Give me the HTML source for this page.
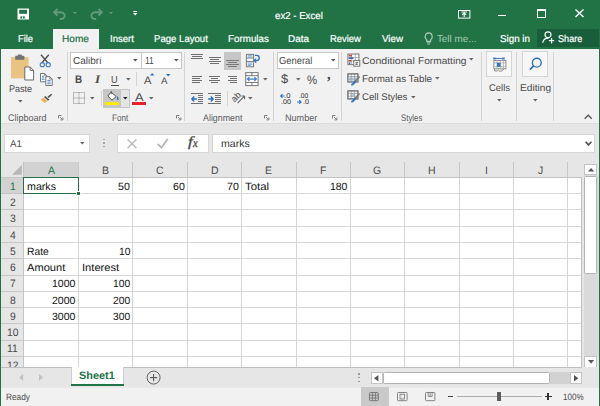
<!DOCTYPE html>
<html><head><meta charset="utf-8"><title>ex2 - Excel</title>
<style>
html,body{margin:0;padding:0;}
body{width:600px;height:406px;overflow:hidden;background:#fff;position:relative;font-family:"Liberation Sans",sans-serif;text-rendering:geometricPrecision;}
.r{position:absolute;display:block;}
svg{overflow:visible;}
.t{position:absolute;white-space:nowrap;line-height:14px;transform-origin:0 50%;}
</style></head><body>
<!-- window -->
<div class="r" style="left:0px;top:0px;width:600px;height:49px;background:#217346;"></div>
<div class="r" style="left:1px;top:49px;width:598px;height:75px;background:#f1f1f1;"></div>
<div class="r" style="left:1px;top:124px;width:598px;height:38px;background:#e6e6e6;"></div>
<div class="r" style="left:1px;top:123.4px;width:598px;height:1px;background:#dcdcdc;"></div>
<div class="r" style="left:537.3px;top:28.5px;width:61.7px;height:18px;background:#195e3a;"></div>
<div class="r" style="left:53.3px;top:28.5px;width:45.4px;height:21px;background:#f1f1f1;"></div>
<!-- title bar -->
<span class="t" style="left:275.30px;top:10px;font-size:10px;color:#fff;transform:scaleX(0.9666);-webkit-text-stroke:0.2px #fff;">ex2 - Excel</span>
<svg class="r" style="left:17px;top:7.5px" width="12.5" height="12" viewBox="0 0 12.5 12"><rect x="0.5" y="0.4" width="11.5" height="11.1" rx="0.5" fill="#fff"/><rect x="2.2" y="1.8" width="7.8" height="4" fill="#217346"/><rect x="3.3" y="8.4" width="4.5" height="2.2" fill="#217346"/><rect x="5.2" y="8.4" width="0.8" height="2.2" fill="#fff"/></svg>
<svg class="r" style="left:52.6px;top:8.2px" width="13" height="12" viewBox="0 0 13 12"><path d="M1.2 4.2H7.4C10.8 4.2 12.4 6.8 11.4 9C10.6 10.6 9 11.2 6.8 11" fill="none" stroke="#639b7c" stroke-width="1.9"/><path d="M4.5 0.9L1.2 4.2L4.5 7.5" fill="none" stroke="#639b7c" stroke-width="1.9"/></svg>
<svg class="r" style="left:72.5px;top:11.85px" width="4" height="2.3" viewBox="0 0 4 2.3"><path d="M0 0H4L2.0 2.3Z" fill="#639b7c"/></svg>
<svg class="r" style="left:89.6px;top:8.2px" width="13" height="12" viewBox="0 0 13 12"><g transform="translate(13 0) scale(-1 1)"><path d="M1.2 4.2H7.4C10.8 4.2 12.4 6.8 11.4 9C10.6 10.6 9 11.2 6.8 11" fill="none" stroke="#639b7c" stroke-width="1.9"/><path d="M4.5 0.9L1.2 4.2L4.5 7.5" fill="none" stroke="#639b7c" stroke-width="1.9"/></g></svg>
<svg class="r" style="left:109.3px;top:11.85px" width="4" height="2.3" viewBox="0 0 4 2.3"><path d="M0 0H4L2.0 2.3Z" fill="#639b7c"/></svg>
<svg class="r" style="left:133.2px;top:11.2px" width="4.4" height="4.6" viewBox="0 0 4.4 4.6"><rect x="0.3" y="0" width="3.8" height="1" fill="#fff"/><path d="M0 2.1H4.4L2.2 4.5Z" fill="#fff"/></svg>
<svg class="r" style="left:458px;top:10px" width="12.4" height="8.6" viewBox="0 0 12.4 8.6"><rect x="0.5" y="0.5" width="11.4" height="7.6" fill="none" stroke="#fff" stroke-width="1"/><path d="M6.2 7V3.2M4.2 4.8L6.2 2.8L8.2 4.8" fill="none" stroke="#fff" stroke-width="1.1"/><rect x="3.4" y="1.6" width="5.6" height="0.9" fill="#fff"/></svg>
<div class="r" style="left:498px;top:14.6px;width:8px;height:1.3px;background:#fff;"></div>
<div class="r" style="left:536.8px;top:9.4px;width:8.8px;height:8.8px;border:1.1px solid #fff;box-sizing:border-box;border-top-width:2.2px;"></div>
<svg class="r" style="left:575.4px;top:9.2px" width="9" height="8.6" viewBox="0 0 9 8.6"><path d="M0.5 0.5L8.5 8.1M8.5 0.5L0.5 8.1" stroke="#fff" stroke-width="1.4"/></svg>
<!-- tabs -->
<span class="t" style="left:17.90px;top:33px;font-size:9.9px;color:#fff;transform:scaleX(0.9474);-webkit-text-stroke:0.2px #fff;">File</span>
<span class="t" style="left:62.30px;top:33px;font-size:9.9px;color:#217346;transform:scaleX(1.0215);-webkit-text-stroke:0.2px #217346;">Home</span>
<span class="t" style="left:109.70px;top:33px;font-size:9.9px;color:#fff;transform:scaleX(0.9697);-webkit-text-stroke:0.2px #fff;">Insert</span>
<span class="t" style="left:153.50px;top:33px;font-size:9.9px;color:#fff;transform:scaleX(0.9714);-webkit-text-stroke:0.2px #fff;">Page Layout</span>
<span class="t" style="left:227.50px;top:33px;font-size:9.9px;color:#fff;transform:scaleX(0.9931);-webkit-text-stroke:0.2px #fff;">Formulas</span>
<span class="t" style="left:288.00px;top:33px;font-size:9.9px;color:#fff;transform:scaleX(1.0029);-webkit-text-stroke:0.2px #fff;">Data</span>
<span class="t" style="left:330.00px;top:33px;font-size:9.9px;color:#fff;transform:scaleX(0.9547);-webkit-text-stroke:0.2px #fff;">Review</span>
<span class="t" style="left:381.50px;top:33px;font-size:9.9px;color:#fff;transform:scaleX(0.9866);-webkit-text-stroke:0.2px #fff;">View</span>
<span class="t" style="left:436.90px;top:33px;font-size:9.9px;color:#a9ccb7;transform:scaleX(1.0000);">Tell me...</span>
<span class="t" style="left:500.20px;top:33px;font-size:9.9px;color:#fff;transform:scaleX(0.9936);-webkit-text-stroke:0.2px #fff;">Sign in</span>
<span class="t" style="left:558.20px;top:33px;font-size:9.9px;color:#fff;transform:scaleX(0.9231);-webkit-text-stroke:0.2px #fff;">Share</span>
<svg class="r" style="left:423.6px;top:32.4px" width="9.4" height="13" viewBox="0 0 9.4 13"><path d="M4.7 0.9A3.7 3.7 0 0 0 2.7 7.6V9.4H6.7V7.6A3.7 3.7 0 0 0 4.7 0.9Z" fill="none" stroke="#a9ccb7" stroke-width="1.1"/><path d="M2.9 10.8H6.5" stroke="#a9ccb7" stroke-width="1"/><path d="M3.5 12.2H5.9" stroke="#a9ccb7" stroke-width="0.9"/></svg>
<svg class="r" style="left:542px;top:31.4px" width="14" height="13" viewBox="0 0 14 13"><circle cx="6" cy="3.8" r="3" fill="none" stroke="#fff" stroke-width="1.2"/><path d="M0.8 11.8C1.2 8.6 3.4 7.2 6.4 7.2" fill="none" stroke="#fff" stroke-width="1.2"/><path d="M9.6 7V12.4M6.9 9.7H12.3" stroke="#fff" stroke-width="1.2"/></svg>
<!-- ribbon -->
<div class="r" style="left:67.2px;top:51.5px;width:1px;height:69.5px;background:#d4d4d4;"></div>
<div class="r" style="left:184px;top:51.5px;width:1px;height:69.5px;background:#d4d4d4;"></div>
<div class="r" style="left:273px;top:51.5px;width:1px;height:69.5px;background:#d4d4d4;"></div>
<div class="r" style="left:341.3px;top:51.5px;width:1px;height:69.5px;background:#d4d4d4;"></div>
<div class="r" style="left:481.3px;top:51.5px;width:1px;height:69.5px;background:#d4d4d4;"></div>
<div class="r" style="left:516.2px;top:51.5px;width:1px;height:69.5px;background:#d4d4d4;"></div>
<div class="r" style="left:553px;top:51.5px;width:1px;height:69.5px;background:#d4d4d4;"></div>
<span class="t" style="left:7.90px;top:112px;font-size:9.5px;color:#5c5c5c;transform:scaleX(0.9493);">Clipboard</span>
<span class="t" style="left:112.00px;top:112px;font-size:9.5px;color:#5c5c5c;transform:scaleX(0.8579);">Font</span>
<span class="t" style="left:203.30px;top:112px;font-size:9.5px;color:#5c5c5c;transform:scaleX(0.9330);">Alignment</span>
<span class="t" style="left:285.00px;top:112px;font-size:9.5px;color:#5c5c5c;transform:scaleX(0.9564);">Number</span>
<span class="t" style="left:401.00px;top:112px;font-size:9.5px;color:#5c5c5c;transform:scaleX(0.8228);">Styles</span>
<svg class="r" style="left:58.2px;top:115.2px" width="5.4" height="5.4" viewBox="0 0 5.4 5.4"><path d="M0.5 3.4V0.5H3.4" fill="none" stroke="#7a7a7a" stroke-width="1"/><path d="M2 2L4.8 4.8M4.9 2.4V4.9H2.4" fill="none" stroke="#7a7a7a" stroke-width="0.9"/></svg>
<svg class="r" style="left:175.7px;top:115.2px" width="5.4" height="5.4" viewBox="0 0 5.4 5.4"><path d="M0.5 3.4V0.5H3.4" fill="none" stroke="#7a7a7a" stroke-width="1"/><path d="M2 2L4.8 4.8M4.9 2.4V4.9H2.4" fill="none" stroke="#7a7a7a" stroke-width="0.9"/></svg>
<svg class="r" style="left:264.2px;top:115.2px" width="5.4" height="5.4" viewBox="0 0 5.4 5.4"><path d="M0.5 3.4V0.5H3.4" fill="none" stroke="#7a7a7a" stroke-width="1"/><path d="M2 2L4.8 4.8M4.9 2.4V4.9H2.4" fill="none" stroke="#7a7a7a" stroke-width="0.9"/></svg>
<svg class="r" style="left:331.8px;top:115.2px" width="5.4" height="5.4" viewBox="0 0 5.4 5.4"><path d="M0.5 3.4V0.5H3.4" fill="none" stroke="#7a7a7a" stroke-width="1"/><path d="M2 2L4.8 4.8M4.9 2.4V4.9H2.4" fill="none" stroke="#7a7a7a" stroke-width="0.9"/></svg>
<svg class="r" style="left:10px;top:53.5px" width="25" height="27" viewBox="0 0 25 27"><rect x="1" y="3" width="17.6" height="21.4" fill="#eac282"/><rect x="5.2" y="1.8" width="9.2" height="4" fill="#737373"/><rect x="7.6" y="0.4" width="4.4" height="3" rx="1.2" fill="#737373"/><path d="M14.8 13H20.2L23.6 16.4V26H14.8Z" fill="#fff" stroke="#6a6a6a" stroke-width="1"/><path d="M20.2 13V16.4H23.6" fill="none" stroke="#6a6a6a" stroke-width="1"/></svg>
<span class="t" style="left:8.90px;top:83px;font-size:9.7px;color:#4a4a4a;transform:scaleX(0.9321);">Paste</span>
<svg class="r" style="left:18.0px;top:99.7px" width="4.6" height="2.6" viewBox="0 0 4.6 2.6"><path d="M0 0H4.6L2.3 2.6Z" fill="#666"/></svg>
<svg class="r" style="left:39.4px;top:53.6px" width="13" height="14" viewBox="0 0 13 14"><path d="M2 0.8L8.8 8.8M9.8 0.8L3 8.8" stroke="#505050" stroke-width="1.4" fill="none"/><circle cx="3.3" cy="10.7" r="2.1" fill="none" stroke="#3f7cc8" stroke-width="1.1"/><circle cx="9.2" cy="10.7" r="2.1" fill="none" stroke="#3f7cc8" stroke-width="1.1"/></svg>
<svg class="r" style="left:39.6px;top:73px" width="13" height="13.5" viewBox="0 0 13 13.5"><path d="M0.5 0.5H4.6L6.8 2.7V8.8H0.5Z" fill="#fff" stroke="#747474" stroke-width="1"/><path d="M4.6 0.5V2.7H6.8" fill="none" stroke="#747474" stroke-width="0.8"/><path d="M5.8 3.7H9.8L12.2 6.1V12.5H5.8Z" fill="#fff" stroke="#747474" stroke-width="1"/><path d="M9.8 3.7V6.1H12.2" fill="none" stroke="#747474" stroke-width="0.8"/><path d="M7.4 7.4H10.6M7.4 9.1H10.6M7.4 10.8H10.6M1.9 3.2H4.2M1.9 4.9H4.4M1.9 6.6H4.4" stroke="#3f7cc8" stroke-width="0.9"/></svg>
<svg class="r" style="left:56.7px;top:77.3px" width="4.6" height="2.6" viewBox="0 0 4.6 2.6"><path d="M0 0H4.6L2.3 2.6Z" fill="#666"/></svg>
<svg class="r" style="left:40.2px;top:93px" width="13" height="11" viewBox="0 0 13 11"><g transform="scale(1.06 0.96)"><path d="M7 4L10.5 0.8L11.5 1.8L8.3 5.2Z" fill="#555"/><path d="M5 3L9 7L7.5 8L3.8 4.2Z" fill="#555"/><path d="M3.3 4.8L7 8.5L4.5 10.5L0.5 7Z" fill="#e8b55c"/></g></svg>
<div class="r" style="left:70px;top:52px;width:71.5px;height:17.3px;background:#fff;border:1px solid #c6c6c6;box-sizing:border-box;"></div>
<div class="r" style="left:141.5px;top:52px;width:40px;height:17.3px;background:#fff;border:1px solid #c6c6c6;box-sizing:border-box;border-left:none;"></div>
<span class="t" style="left:72.80px;top:55px;font-size:10.2px;color:#4a4a4a;transform:scaleX(0.9821);">Calibri</span>
<span class="t" style="left:144.80px;top:55px;font-size:10.2px;color:#4a4a4a;transform:scaleX(0.8296);">11</span>
<svg class="r" style="left:133.3px;top:59.1px" width="4.6" height="2.6" viewBox="0 0 4.6 2.6"><path d="M0 0H4.6L2.3 2.6Z" fill="#555"/></svg>
<svg class="r" style="left:174.3px;top:59.1px" width="4.6" height="2.6" viewBox="0 0 4.6 2.6"><path d="M0 0H4.6L2.3 2.6Z" fill="#555"/></svg>
<span class="t" style="left:75.20px;top:73px;font-size:11px;color:#4a4a4a;transform:scaleX(0.8965);font-weight:700;">B</span>
<span class="t" style="left:95.13px;top:73px;font-size:11.5px;color:#4a4a4a;transform:scaleX(1.1325);font-weight:700;font-style:italic;font-family:'Liberation Serif',serif;">I</span>
<span class="t" style="left:111.40px;top:74px;font-size:10.2px;color:#4a4a4a;transform:scaleX(0.8987);">U</span>
<div class="r" style="left:111px;top:84.6px;width:7.5px;height:1px;background:#4a4a4a;"></div>
<svg class="r" style="left:125.5px;top:77.9px" width="4.6" height="2.6" viewBox="0 0 4.6 2.6"><path d="M0 0H4.6L2.3 2.6Z" fill="#666"/></svg>
<div class="r" style="left:135.6px;top:72px;width:1px;height:14px;background:#d4d4d4;"></div>
<span class="t" style="left:143.80px;top:74px;font-size:10.8px;color:#4a4a4a;transform:scaleX(1.0227);">A</span>
<svg class="r" style="left:149.8px;top:73px" width="4.4" height="2.6" viewBox="0 0 4.4 2.6"><path d="M0 2.6L2.2 0L4.4 2.6Z" fill="#2b72c4"/></svg>
<span class="t" style="left:161.20px;top:74px;font-size:9.4px;color:#4a4a4a;transform:scaleX(1.0321);">A</span>
<svg class="r" style="left:166.2px;top:73.6px" width="4.4" height="2.6" viewBox="0 0 4.4 2.6"><path d="M0 0L2.2 2.6L4.4 0Z" fill="#2b72c4"/></svg>
<svg class="r" style="left:73.4px;top:92.2px" width="12" height="12" viewBox="0 0 12 12"><path d="M0.5 0.5H11.5V11.5H0.5ZM6 0.5V11.5M0.5 6H11.5" fill="none" stroke="#858585" stroke-width="1" stroke-dasharray="1 1"/></svg>
<svg class="r" style="left:90.2px;top:96.6px" width="4.6" height="2.6" viewBox="0 0 4.6 2.6"><path d="M0 0H4.6L2.3 2.6Z" fill="#666"/></svg>
<div class="r" style="left:101.2px;top:91px;width:1px;height:14.5px;background:#d4d4d4;"></div>
<div class="r" style="left:103.3px;top:89.4px;width:26.5px;height:18.4px;background:#c6c6c6;"></div>
<div class="r" style="left:121px;top:90.2px;width:8px;height:16.8px;background:#e4e4e4;"></div>
<svg class="r" style="left:107px;top:91.2px" width="13" height="10" viewBox="0 0 13 10"><path d="M4.2 1.2L9.2 5.6L5 9.2L0.8 5Z" fill="#fff" stroke="#555" stroke-width="1"/><path d="M10.3 5C12 7.3 12 9.2 10.8 9.2C9.6 9.2 9.6 7.3 10.3 5Z" fill="#2b72c4"/><path d="M4.2 0V3.2" stroke="#555" stroke-width="1"/></svg>
<div class="r" style="left:105px;top:101.8px;width:14px;height:2.9px;background:#ffeb00;"></div>
<svg class="r" style="left:122.7px;top:96.6px" width="4.6" height="2.6" viewBox="0 0 4.6 2.6"><path d="M0 0H4.6L2.3 2.6Z" fill="#222"/></svg>
<span class="t" style="left:134.80px;top:91px;font-size:11.2px;color:#4a4a4a;transform:scaleX(1.1461);">A</span>
<div class="r" style="left:132px;top:102px;width:13.6px;height:3px;background:#e8202a;"></div>
<svg class="r" style="left:149.4px;top:96.6px" width="4.6" height="2.6" viewBox="0 0 4.6 2.6"><path d="M0 0H4.6L2.3 2.6Z" fill="#666"/></svg>
<div class="r" style="left:191px;top:54px;width:12px;height:1px;background:#707070;"></div>
<div class="r" style="left:192.2px;top:56px;width:9.7px;height:1px;background:#707070;"></div>
<div class="r" style="left:191px;top:58px;width:12px;height:1px;background:#707070;"></div>
<div class="r" style="left:208.6px;top:57px;width:12.4px;height:1px;background:#707070;"></div>
<div class="r" style="left:210.2px;top:59px;width:9.2px;height:1px;background:#707070;"></div>
<div class="r" style="left:208.6px;top:61px;width:12.4px;height:1px;background:#707070;"></div>
<div class="r" style="left:210.2px;top:63px;width:9.2px;height:1px;background:#707070;"></div>
<div class="r" style="left:223.6px;top:51.8px;width:17.3px;height:18px;background:#c6c6c6;"></div>
<div class="r" style="left:226.1px;top:60px;width:12.5px;height:1px;background:#7a7a7a;"></div>
<div class="r" style="left:227.8px;top:62px;width:9.2px;height:1px;background:#7a7a7a;"></div>
<div class="r" style="left:226.1px;top:64px;width:12.5px;height:1px;background:#7a7a7a;"></div>
<div class="r" style="left:227.8px;top:66px;width:9.2px;height:1px;background:#7a7a7a;"></div>
<div class="r" style="left:192px;top:76px;width:9.9px;height:1px;background:#707070;"></div>
<div class="r" style="left:192px;top:78px;width:7.9px;height:1px;background:#707070;"></div>
<div class="r" style="left:192px;top:80px;width:9.9px;height:1px;background:#707070;"></div>
<div class="r" style="left:192px;top:82px;width:7.9px;height:1px;background:#707070;"></div>
<div class="r" style="left:209px;top:76px;width:11px;height:1px;background:#707070;"></div>
<div class="r" style="left:211px;top:78px;width:7px;height:1px;background:#707070;"></div>
<div class="r" style="left:209px;top:80px;width:11px;height:1px;background:#707070;"></div>
<div class="r" style="left:211px;top:82px;width:7px;height:1px;background:#707070;"></div>
<div class="r" style="left:227.5px;top:76px;width:9.7px;height:1px;background:#707070;"></div>
<div class="r" style="left:229.9px;top:78px;width:7.3px;height:1px;background:#707070;"></div>
<div class="r" style="left:227.5px;top:80px;width:9.7px;height:1px;background:#707070;"></div>
<div class="r" style="left:229.9px;top:82px;width:7.3px;height:1px;background:#707070;"></div>
<svg class="r" style="left:245px;top:53px" width="16" height="15" viewBox="0 0 16 15"><rect x="1.4" y="1.4" width="7.2" height="12.4" fill="#fff" stroke="#7a7a7a" stroke-width="1"/><path d="M1.4 5H8.6M1.4 8.6H8.6" stroke="#7a7a7a" stroke-width="1"/><path d="M2.6 2.7H7.4M2.6 3.9H7.4M2.6 10H7.4M2.6 11.3H7.4M2.6 12.5H6" stroke="#5b9bd5" stroke-width="0.8"/><path d="M9.8 2.4H11.6A2.6 2.6 0 0 1 11.6 7.6H9.6" fill="none" stroke="#2b72c4" stroke-width="1.3"/><path d="M11.2 5.6L9.2 7.6L11.2 9.6" fill="none" stroke="#2b72c4" stroke-width="1.3"/></svg>
<svg class="r" style="left:245px;top:72px" width="14" height="14" viewBox="0 0 14 14"><rect x="0.7" y="0.6" width="12.4" height="13" fill="#fff" stroke="#777" stroke-width="1"/><path d="M0.7 3.7H13.1M0.7 10.5H13.1M6.9 0.6V3.7M6.9 10.5V13.6" stroke="#777" stroke-width="1"/><path d="M2.6 7.1H11.2M4.4 5.2L2.4 7.1L4.4 9M9.4 5.2L11.4 7.1L9.4 9" fill="none" stroke="#3a80cc" stroke-width="1.2"/></svg>
<svg class="r" style="left:262.7px;top:77.9px" width="4.6" height="2.6" viewBox="0 0 4.6 2.6"><path d="M0 0H4.6L2.3 2.6Z" fill="#666"/></svg>
<div class="r" style="left:190.9px;top:93px;width:12.1px;height:1px;background:#707070;"></div>
<div class="r" style="left:197.6px;top:95px;width:5.4px;height:1px;background:#707070;"></div>
<div class="r" style="left:197.6px;top:97px;width:5.4px;height:1px;background:#707070;"></div>
<div class="r" style="left:197.6px;top:99px;width:5.4px;height:1px;background:#707070;"></div>
<div class="r" style="left:197.6px;top:101px;width:5.4px;height:1px;background:#707070;"></div>
<div class="r" style="left:190.9px;top:103px;width:12.1px;height:1px;background:#707070;"></div>
<div class="r" style="left:208.4px;top:93px;width:12.6px;height:1px;background:#707070;"></div>
<div class="r" style="left:215.3px;top:95px;width:5.7px;height:1px;background:#707070;"></div>
<div class="r" style="left:215.3px;top:97px;width:5.7px;height:1px;background:#707070;"></div>
<div class="r" style="left:215.3px;top:99px;width:5.7px;height:1px;background:#707070;"></div>
<div class="r" style="left:215.3px;top:101px;width:5.7px;height:1px;background:#707070;"></div>
<div class="r" style="left:208.4px;top:103px;width:12.6px;height:1px;background:#707070;"></div>
<svg class="r" style="left:190.8px;top:94.5px" width="6" height="8" viewBox="0 0 6 8"><path d="M0.8 4H5.8M3.2 1.5L0.8 4L3.2 6.5" fill="none" stroke="#2b72c4" stroke-width="1.4"/></svg>
<svg class="r" style="left:208.4px;top:94.5px" width="6" height="8" viewBox="0 0 6 8"><path d="M0.2 4H5.2M2.8 1.5L5.2 4L2.8 6.5" fill="none" stroke="#2b72c4" stroke-width="1.4"/></svg>
<div class="r" style="left:226.6px;top:91px;width:1px;height:14.5px;background:#d4d4d4;"></div>
<svg class="r" style="left:230px;top:90px" width="17" height="16" viewBox="0 0 17 16"><path d="M7.6 13.2L14.4 6.2M14.6 6H11.4M14.6 6V9.2" fill="none" stroke="#666" stroke-width="1.1"/><text x="0" y="0" font-size="9" fill="#444" transform="translate(4.4 12.5) rotate(-45)" font-family="Liberation Sans, sans-serif">ab</text></svg>
<svg class="r" style="left:247.7px;top:96.6px" width="4.6" height="2.6" viewBox="0 0 4.6 2.6"><path d="M0 0H4.6L2.3 2.6Z" fill="#666"/></svg>
<div class="r" style="left:276.5px;top:52px;width:62px;height:17.3px;background:#fff;border:1px solid #c6c6c6;box-sizing:border-box;"></div>
<span class="t" style="left:278.80px;top:55px;font-size:10.2px;color:#4a4a4a;transform:scaleX(0.9226);">General</span>
<svg class="r" style="left:330.5px;top:59.1px" width="4.6" height="2.6" viewBox="0 0 4.6 2.6"><path d="M0 0H4.6L2.3 2.6Z" fill="#555"/></svg>
<span class="t" style="left:281.30px;top:72px;font-size:12.5px;color:#4a4a4a;transform:scaleX(1.0234);">$</span>
<svg class="r" style="left:295.9px;top:77.9px" width="4.6" height="2.6" viewBox="0 0 4.6 2.6"><path d="M0 0H4.6L2.3 2.6Z" fill="#666"/></svg>
<span class="t" style="left:306.80px;top:73px;font-size:12.3px;color:#4a4a4a;transform:scaleX(0.9318);">%</span>
<span class="t" style="left:326.60px;top:68px;font-size:16px;color:#4a4a4a;transform:scaleX(0.9000);font-weight:700;font-family:'Liberation Serif',serif;">,</span>
<span class="t" style="left:284.20px;top:90px;font-size:6.8px;color:#333;transform:scaleX(1.1272);">.0</span>
<span class="t" style="left:280.60px;top:96px;font-size:6.8px;color:#333;transform:scaleX(1.0580);">.00</span>
<svg class="r" style="left:279.6px;top:93.5px" width="4.6" height="4" viewBox="0 0 4.6 4"><path d="M4.6 2H0.8M2.5 0.2L0.7 2L2.5 3.8" fill="none" stroke="#2b72c4" stroke-width="1.1"/></svg>
<span class="t" style="left:299.40px;top:90px;font-size:6.8px;color:#333;transform:scaleX(0.9733);">.00</span>
<span class="t" style="left:302.60px;top:96px;font-size:6.8px;color:#333;transform:scaleX(1.0567);">.0</span>
<svg class="r" style="left:297.4px;top:99.6px" width="4.8" height="4" viewBox="0 0 4.8 4"><path d="M0 2H4M2.3 0.2L4.1 2L2.3 3.8" fill="none" stroke="#2b72c4" stroke-width="1.1"/></svg>
<span class="t" style="left:362.30px;top:55px;font-size:9.7px;color:#4a4a4a;transform:scaleX(1.0896);">Conditional</span>
<span class="t" style="left:417.50px;top:55px;font-size:9.7px;color:#4a4a4a;transform:scaleX(1.0460);">Formatting</span>
<svg class="r" style="left:469.2px;top:58.3px" width="4.6" height="2.6" viewBox="0 0 4.6 2.6"><path d="M0 0H4.6L2.3 2.6Z" fill="#666"/></svg>
<span class="t" style="left:362.30px;top:73px;font-size:9.7px;color:#4a4a4a;transform:scaleX(1.0107);">Format as Table</span>
<svg class="r" style="left:435.2px;top:77.3px" width="4.6" height="2.6" viewBox="0 0 4.6 2.6"><path d="M0 0H4.6L2.3 2.6Z" fill="#666"/></svg>
<span class="t" style="left:362.30px;top:91px;font-size:9.7px;color:#4a4a4a;transform:scaleX(0.9927);">Cell Styles</span>
<svg class="r" style="left:410.8px;top:95.6px" width="4.6" height="2.6" viewBox="0 0 4.6 2.6"><path d="M0 0H4.6L2.3 2.6Z" fill="#666"/></svg>
<svg class="r" style="left:347px;top:53px" width="14" height="14" viewBox="0 0 14 14"><rect x="0.9" y="1" width="11" height="10.6" fill="#fff" stroke="#777" stroke-width="1"/><path d="M4.6 1V11.6M8.3 1V11.6M0.9 4.5H11.9M0.9 8H11.9" stroke="#a0a0a0" stroke-width="0.8"/><rect x="1.8" y="1.8" width="3.2" height="1.7" fill="#d8432a"/><rect x="1.8" y="4.3" width="4.6" height="1.7" fill="#2b72c4"/><rect x="1.8" y="6.9" width="2.6" height="1.7" fill="#d8432a"/><rect x="1.8" y="9.4" width="1.6" height="1.6" fill="#2b72c4"/><rect x="6.8" y="7.6" width="6" height="5.6" fill="#fff" stroke="#666" stroke-width="0.9"/><path d="M8.4 9.6H11.2M8.4 11.3H11.2M10.6 8.8L9 12.1" stroke="#555" stroke-width="0.7"/></svg>
<svg class="r" style="left:346.9px;top:72.7px" width="14" height="14" viewBox="0 0 14 14"><rect x="0.9" y="0.9" width="10" height="8" fill="#fff" stroke="#777" stroke-width="1"/><rect x="0.9" y="3.6" width="10" height="5" fill="#c5dcf0"/><path d="M0.9 3.4H10.9M0.9 6.2H10.9M4.2 0.9V8.9M7.6 0.9V8.9" stroke="#999" stroke-width="0.8"/><rect x="0.9" y="0.9" width="10" height="8" fill="none" stroke="#777" stroke-width="1"/><path d="M12.6 3.4L8.2 8.6" stroke="#7a7a7a" stroke-width="1.6"/><path d="M8.6 8.2L5.4 11.6" stroke="#2b72c4" stroke-width="2"/><path d="M4 12.6L6.4 12.3L4.6 10.6Z" fill="#2b72c4"/></svg>
<svg class="r" style="left:346.9px;top:89.9px" width="14" height="14" viewBox="0 0 14 14"><rect x="0.9" y="0.9" width="10" height="8" fill="#fff" stroke="#777" stroke-width="1"/><rect x="3.6" y="3.4" width="4.4" height="3" fill="#b5d1ec"/><path d="M0.9 3.4H10.9M0.9 6.2H10.9M4.2 0.9V8.9M7.6 0.9V8.9" stroke="#999" stroke-width="0.8"/><rect x="0.9" y="0.9" width="10" height="8" fill="none" stroke="#777" stroke-width="1"/><path d="M12.6 3.4L8.2 8.6" stroke="#7a7a7a" stroke-width="1.6"/><path d="M8.6 8.2L5.4 11.6" stroke="#2b72c4" stroke-width="2"/><path d="M4 12.6L6.4 12.3L4.6 10.6Z" fill="#2b72c4"/></svg>
<div class="r" style="left:486.2px;top:51.3px;width:25.6px;height:26.2px;background:#f7f7f7;border:1px solid #d4d4d4;box-sizing:border-box;"></div>
<div class="r" style="left:522.2px;top:51.3px;width:25.6px;height:26.2px;background:#f7f7f7;border:1px solid #d4d4d4;box-sizing:border-box;"></div>
<svg class="r" style="left:492.6px;top:57px" width="14" height="15" viewBox="0 0 14 15"><path d="M0.9 1.5H11.1" stroke="#2b72c4" stroke-width="0.9"/><path d="M0.9 0.2V2.8M11.1 0.2V2.8" stroke="#2b72c4" stroke-width="0.9"/><path d="M2.6 0.5L1.2 1.5L2.6 2.5M9.4 0.5L10.8 1.5L9.4 2.5" fill="none" stroke="#2b72c4" stroke-width="0.7"/><rect x="0.9" y="3.4" width="12" height="8.4" fill="#fff" stroke="#808080" stroke-width="0.9"/><path d="M0.9 5.9H12.9M0.9 9.6H12.9M4 3.4V11.8M7.4 3.4V11.8M10.4 3.4V11.8" stroke="#a6a6a6" stroke-width="0.8"/><rect x="4.1" y="5.8" width="3.3" height="4" fill="#2b72c4"/><path d="M1.6 12V14H4.6L5.6 12.6M6 14H9L10.6 12" fill="none" stroke="#808080" stroke-width="0.9"/></svg>
<svg class="r" style="left:529px;top:57.4px" width="14" height="14" viewBox="0 0 14 14"><circle cx="7.8" cy="5.7" r="4.4" fill="none" stroke="#2e6fba" stroke-width="1.4"/><path d="M4.6 8.9L0.9 12.6" stroke="#2e6fba" stroke-width="1.8"/></svg>
<span class="t" style="left:488.60px;top:82px;font-size:9.8px;color:#4a4a4a;transform:scaleX(0.9631);">Cells</span>
<span class="t" style="left:519.60px;top:82px;font-size:9.8px;color:#4a4a4a;transform:scaleX(1.0371);">Editing</span>
<svg class="r" style="left:496.7px;top:99.0px" width="4.6" height="2.6" viewBox="0 0 4.6 2.6"><path d="M0 0H4.6L2.3 2.6Z" fill="#666"/></svg>
<svg class="r" style="left:532.9px;top:99.0px" width="4.6" height="2.6" viewBox="0 0 4.6 2.6"><path d="M0 0H4.6L2.3 2.6Z" fill="#666"/></svg>
<svg class="r" style="left:584.2px;top:114px" width="8.4" height="5.4" viewBox="0 0 8.4 5.4"><path d="M0.6 4.8L4.2 1.2L7.8 4.8" fill="none" stroke="#555" stroke-width="1.3"/></svg>
<!-- formula bar -->
<div class="r" style="left:4.4px;top:133.6px;width:86px;height:19.6px;background:#fff;border:1px solid #d6d6d6;box-sizing:border-box;"></div>
<span class="t" style="left:9.60px;top:138px;font-size:9.8px;color:#4a4a4a;transform:scaleX(0.9996);">A1</span>
<svg class="r" style="left:80.1px;top:142.3px" width="4.6" height="2.6" viewBox="0 0 4.6 2.6"><path d="M0 0H4.6L2.3 2.6Z" fill="#666"/></svg>
<div class="r" style="left:102.9px;top:138.6px;width:1.7px;height:1.7px;background:#a8a8a8;"></div>
<div class="r" style="left:102.9px;top:142.3px;width:1.7px;height:1.7px;background:#a8a8a8;"></div>
<div class="r" style="left:102.9px;top:145.6px;width:1.7px;height:1.7px;background:#a8a8a8;"></div>
<div class="r" style="left:116.5px;top:133.6px;width:92.3px;height:19.6px;background:#fff;border:1px solid #d6d6d6;box-sizing:border-box;"></div>
<svg class="r" style="left:126.7px;top:139.3px" width="10" height="9.6" viewBox="0 0 10 9.6"><path d="M0.6 0.6L9.4 9M9.4 0.6L0.6 9" stroke="#b9b9b9" stroke-width="1.4"/></svg>
<svg class="r" style="left:157px;top:138.4px" width="11.4" height="10.4" viewBox="0 0 11.4 10.4"><path d="M0.6 5.8L4.5 9.6L10.8 0.8" fill="none" stroke="#b6b6b6" stroke-width="1.8"/></svg>
<span class="t" style="left:187.50px;top:136px;font-size:14px;color:#4a4a4a;transform:scaleX(1.2116);font-style:italic;font-family:'Liberation Serif',serif;-webkit-text-stroke:0.35px #4a4a4a;">f</span>
<span class="t" style="left:193.36px;top:136px;font-size:12px;color:#4a4a4a;transform:scaleX(0.8696);font-style:italic;font-family:'Liberation Serif',serif;-webkit-text-stroke:0.3px #4a4a4a;">x</span>
<div class="r" style="left:211.5px;top:133.6px;width:383.4px;height:19.6px;background:#fff;border:1px solid #d6d6d6;box-sizing:border-box;"></div>
<span class="t" style="left:221.30px;top:138px;font-size:10.4px;color:#333;transform:scaleX(1.0181);">marks</span>
<svg class="r" style="left:584.6px;top:140.8px" width="7" height="5" viewBox="0 0 7 5"><path d="M0.6 0.7L3.5 3.9L6.4 0.7" fill="none" stroke="#555" stroke-width="1.7"/></svg>
<!-- grid -->
<div class="r" style="left:1px;top:161.6px;width:581px;height:16px;background:#e6e6e6;"></div>
<div class="r" style="left:23.6px;top:177px;width:558.4px;height:191px;background:#fff;"></div>
<div class="r" style="left:1px;top:177px;width:22.6px;height:191px;background:#e6e6e6;"></div>
<div class="r" style="left:23.6px;top:161.6px;width:54.9px;height:15.4px;background:#d2d2d2;"></div>
<div class="r" style="left:1px;top:177.5px;width:22.6px;height:16.6px;background:#d2d2d2;"></div>
<div class="r" style="left:1px;top:193.0px;width:22.6px;height:1px;background:#c6c6c6;"></div>
<div class="r" style="left:23.6px;top:193.0px;width:558.4px;height:1px;background:#d8d8d8;"></div>
<div class="r" style="left:1px;top:209.3px;width:22.6px;height:1px;background:#c6c6c6;"></div>
<div class="r" style="left:23.6px;top:209.3px;width:558.4px;height:1px;background:#d8d8d8;"></div>
<div class="r" style="left:1px;top:225.6px;width:22.6px;height:1px;background:#c6c6c6;"></div>
<div class="r" style="left:23.6px;top:225.6px;width:558.4px;height:1px;background:#d8d8d8;"></div>
<div class="r" style="left:1px;top:241.9px;width:22.6px;height:1px;background:#c6c6c6;"></div>
<div class="r" style="left:23.6px;top:241.9px;width:558.4px;height:1px;background:#d8d8d8;"></div>
<div class="r" style="left:1px;top:258.2px;width:22.6px;height:1px;background:#c6c6c6;"></div>
<div class="r" style="left:23.6px;top:258.2px;width:558.4px;height:1px;background:#d8d8d8;"></div>
<div class="r" style="left:1px;top:274.5px;width:22.6px;height:1px;background:#c6c6c6;"></div>
<div class="r" style="left:23.6px;top:274.5px;width:558.4px;height:1px;background:#d8d8d8;"></div>
<div class="r" style="left:1px;top:290.8px;width:22.6px;height:1px;background:#c6c6c6;"></div>
<div class="r" style="left:23.6px;top:290.8px;width:558.4px;height:1px;background:#d8d8d8;"></div>
<div class="r" style="left:1px;top:307.1px;width:22.6px;height:1px;background:#c6c6c6;"></div>
<div class="r" style="left:23.6px;top:307.1px;width:558.4px;height:1px;background:#d8d8d8;"></div>
<div class="r" style="left:1px;top:323.4px;width:22.6px;height:1px;background:#c6c6c6;"></div>
<div class="r" style="left:23.6px;top:323.4px;width:558.4px;height:1px;background:#d8d8d8;"></div>
<div class="r" style="left:1px;top:339.7px;width:22.6px;height:1px;background:#c6c6c6;"></div>
<div class="r" style="left:23.6px;top:339.7px;width:558.4px;height:1px;background:#d8d8d8;"></div>
<div class="r" style="left:1px;top:356.0px;width:22.6px;height:1px;background:#c6c6c6;"></div>
<div class="r" style="left:23.6px;top:356.0px;width:558.4px;height:1px;background:#d8d8d8;"></div>
<div class="r" style="left:78.0px;top:161.6px;width:1px;height:15.4px;background:#c6c6c6;"></div>
<div class="r" style="left:78.0px;top:177px;width:1px;height:191px;background:#d4d4d4;"></div>
<div class="r" style="left:132.4px;top:161.6px;width:1px;height:15.4px;background:#c6c6c6;"></div>
<div class="r" style="left:132.4px;top:177px;width:1px;height:191px;background:#d4d4d4;"></div>
<div class="r" style="left:186.9px;top:161.6px;width:1px;height:15.4px;background:#c6c6c6;"></div>
<div class="r" style="left:186.9px;top:177px;width:1px;height:191px;background:#d4d4d4;"></div>
<div class="r" style="left:241.2px;top:161.6px;width:1px;height:15.4px;background:#c6c6c6;"></div>
<div class="r" style="left:241.2px;top:177px;width:1px;height:191px;background:#d4d4d4;"></div>
<div class="r" style="left:295.5px;top:161.6px;width:1px;height:15.4px;background:#c6c6c6;"></div>
<div class="r" style="left:295.5px;top:177px;width:1px;height:191px;background:#d4d4d4;"></div>
<div class="r" style="left:349.9px;top:161.6px;width:1px;height:15.4px;background:#c6c6c6;"></div>
<div class="r" style="left:349.9px;top:177px;width:1px;height:191px;background:#d4d4d4;"></div>
<div class="r" style="left:404.1px;top:161.6px;width:1px;height:15.4px;background:#c6c6c6;"></div>
<div class="r" style="left:404.1px;top:177px;width:1px;height:191px;background:#d4d4d4;"></div>
<div class="r" style="left:458.6px;top:161.6px;width:1px;height:15.4px;background:#c6c6c6;"></div>
<div class="r" style="left:458.6px;top:177px;width:1px;height:191px;background:#d4d4d4;"></div>
<div class="r" style="left:512.8px;top:161.6px;width:1px;height:15.4px;background:#c6c6c6;"></div>
<div class="r" style="left:512.8px;top:177px;width:1px;height:191px;background:#d4d4d4;"></div>
<div class="r" style="left:567.1px;top:161.6px;width:1px;height:15.4px;background:#c6c6c6;"></div>
<div class="r" style="left:567.1px;top:177px;width:1px;height:191px;background:#d4d4d4;"></div>
<div class="r" style="left:23.1px;top:161.6px;width:1px;height:206px;background:#c4c4c4;"></div>
<div class="r" style="left:1px;top:176.6px;width:581px;height:1px;background:#c4c4c4;"></div>
<svg class="r" style="left:12px;top:165px" width="9.8" height="9.8" viewBox="0 0 9.8 9.8"><path d="M9.8 0V9.8H0Z" fill="#b7b7b7"/></svg>
<span class="t" style="left:47.54px;top:164px;font-size:10.8px;color:#217346;transform:scaleX(0.9700);">A</span>
<span class="t" style="left:102.22px;top:164px;font-size:10.8px;color:#4a4a4a;transform:scaleX(0.9700);">B</span>
<span class="t" style="left:156.38px;top:164px;font-size:10.8px;color:#4a4a4a;transform:scaleX(0.9700);">C</span>
<span class="t" style="left:210.78px;top:164px;font-size:10.8px;color:#4a4a4a;transform:scaleX(0.9700);">D</span>
<span class="t" style="left:265.37px;top:164px;font-size:10.8px;color:#4a4a4a;transform:scaleX(0.9700);">E</span>
<span class="t" style="left:320.00px;top:164px;font-size:10.8px;color:#4a4a4a;transform:scaleX(0.9700);">F</span>
<span class="t" style="left:373.41px;top:164px;font-size:10.8px;color:#4a4a4a;transform:scaleX(0.9700);">G</span>
<span class="t" style="left:428.08px;top:164px;font-size:10.8px;color:#4a4a4a;transform:scaleX(0.9700);">H</span>
<span class="t" style="left:484.73px;top:164px;font-size:10.8px;color:#4a4a4a;transform:scaleX(0.9700);">I</span>
<span class="t" style="left:537.83px;top:164px;font-size:10.8px;color:#4a4a4a;transform:scaleX(0.9700);">J</span>
<span class="t" style="left:9.52px;top:180px;font-size:10.8px;color:#217346;transform:scaleX(0.9600);">1</span>
<span class="t" style="left:9.52px;top:196px;font-size:10.8px;color:#4a4a4a;transform:scaleX(0.9600);">2</span>
<span class="t" style="left:9.52px;top:212px;font-size:10.8px;color:#4a4a4a;transform:scaleX(0.9600);">3</span>
<span class="t" style="left:9.52px;top:229px;font-size:10.8px;color:#4a4a4a;transform:scaleX(0.9600);">4</span>
<span class="t" style="left:9.52px;top:245px;font-size:10.8px;color:#4a4a4a;transform:scaleX(0.9600);">5</span>
<span class="t" style="left:9.52px;top:261px;font-size:10.8px;color:#4a4a4a;transform:scaleX(0.9600);">6</span>
<span class="t" style="left:9.52px;top:277px;font-size:10.8px;color:#4a4a4a;transform:scaleX(0.9600);">7</span>
<span class="t" style="left:9.52px;top:294px;font-size:10.8px;color:#4a4a4a;transform:scaleX(0.9600);">8</span>
<span class="t" style="left:9.52px;top:310px;font-size:10.8px;color:#4a4a4a;transform:scaleX(0.9600);">9</span>
<span class="t" style="left:6.65px;top:326px;font-size:10.8px;color:#4a4a4a;transform:scaleX(0.9600);">10</span>
<span class="t" style="left:7.01px;top:342px;font-size:10.8px;color:#4a4a4a;transform:scaleX(0.9600);">11</span>
<span class="t" style="left:6.65px;top:359px;font-size:10.8px;color:#4a4a4a;transform:scaleX(0.9600);">12</span>
<span class="t" style="left:26.80px;top:180px;font-size:10.5px;color:#111;transform:scaleX(1.0154);">marks</span>
<span class="t" style="left:118.20px;top:180px;font-size:10.5px;color:#111;transform:scaleX(1.0124);">50</span>
<span class="t" style="left:172.70px;top:180px;font-size:10.5px;color:#111;transform:scaleX(1.0124);">60</span>
<span class="t" style="left:227.00px;top:180px;font-size:10.5px;color:#111;transform:scaleX(1.0124);">70</span>
<span class="t" style="left:244.90px;top:180px;font-size:10.5px;color:#111;transform:scaleX(1.0833);">Total</span>
<span class="t" style="left:330.10px;top:180px;font-size:10.5px;color:#111;transform:scaleX(0.9923);">180</span>
<span class="t" style="left:26.80px;top:245px;font-size:10.5px;color:#111;transform:scaleX(0.9795);">Rate</span>
<span class="t" style="left:118.60px;top:245px;font-size:10.5px;color:#111;transform:scaleX(0.9781);">10</span>
<span class="t" style="left:26.80px;top:261px;font-size:10.5px;color:#111;transform:scaleX(1.0561);">Amount</span>
<span class="t" style="left:81.70px;top:261px;font-size:10.5px;color:#111;transform:scaleX(1.0623);">Interest</span>
<span class="t" style="left:52.20px;top:277px;font-size:10.5px;color:#111;transform:scaleX(1.0016);">1000</span>
<span class="t" style="left:112.80px;top:277px;font-size:10.5px;color:#111;transform:scaleX(0.9809);">100</span>
<span class="t" style="left:52.20px;top:294px;font-size:10.5px;color:#111;transform:scaleX(1.0016);">2000</span>
<span class="t" style="left:112.80px;top:294px;font-size:10.5px;color:#111;transform:scaleX(0.9809);">200</span>
<span class="t" style="left:52.20px;top:310px;font-size:10.5px;color:#111;transform:scaleX(1.0016);">3000</span>
<span class="t" style="left:112.80px;top:310px;font-size:10.5px;color:#111;transform:scaleX(0.9809);">300</span>
<div class="r" style="left:22.8px;top:176.8px;width:56.6px;height:17.7px;border:1.7px solid #217346;box-sizing:border-box;"></div>
<div class="r" style="left:75.5px;top:191px;width:5px;height:5px;background:#217346;border:1px solid #fff;box-sizing:border-box;"></div>
<!-- scrollbars -->
<div class="r" style="left:582px;top:161px;width:17px;height:207px;background:#e6e6e6;"></div>
<div class="r" style="left:581.4px;top:177px;width:1px;height:191px;background:#bfbfbf;"></div>
<div class="r" style="left:583.8px;top:175px;width:15px;height:181px;background:#dadada;"></div>
<div class="r" style="left:584.2px;top:163.7px;width:13.2px;height:11px;background:#fff;border:1px solid #c3c3c3;box-sizing:border-box;"></div>
<div class="r" style="left:584.2px;top:175.9px;width:13.2px;height:97.8px;background:#fff;border:1px solid #b4b4b4;box-sizing:border-box;border-radius:1.5px;"></div>
<div class="r" style="left:584.2px;top:356px;width:13.2px;height:12px;background:#fff;border:1px solid #c3c3c3;box-sizing:border-box;"></div>
<svg class="r" style="left:587.8px;top:167.6px" width="6.2" height="3.6" viewBox="0 0 6.2 3.6"><path d="M0 3.6L3.1 0L6.2 3.6Z" fill="#555"/></svg>
<svg class="r" style="left:587.8px;top:360.4px" width="6.2" height="3.6" viewBox="0 0 6.2 3.6"><path d="M0 0L3.1 3.6L6.2 0Z" fill="#555"/></svg>
<!-- sheet tabs -->
<div class="r" style="left:1px;top:367.4px;width:598px;height:20px;background:#e6e6e6;"></div>
<div class="r" style="left:1px;top:367.4px;width:581px;height:1px;background:#bfbfbf;"></div>
<div class="r" style="left:71px;top:367.4px;width:53.2px;height:17px;background:#fff;border:1px solid #cfcfcf;box-sizing:border-box;border-top:none;border-bottom:none;"></div>
<div class="r" style="left:71px;top:384px;width:53.2px;height:1.7px;background:#217346;"></div>
<span class="t" style="left:79.30px;top:369px;font-size:10.8px;color:#217346;transform:scaleX(1.0078);font-weight:700;">Sheet1</span>
<svg class="r" style="left:19px;top:374px" width="4.2" height="7" viewBox="0 0 4.2 7"><path d="M4.2 0L0 3.5L4.2 7Z" fill="#c2c2c2"/></svg>
<svg class="r" style="left:38.6px;top:374px" width="4.2" height="7" viewBox="0 0 4.2 7"><path d="M0 0L4.2 3.5L0 7Z" fill="#c2c2c2"/></svg>
<svg class="r" style="left:146px;top:370.4px" width="15.2" height="15.2" viewBox="0 0 15.2 15.2"><circle cx="7.6" cy="7.6" r="6.5" fill="none" stroke="#5f5f5f" stroke-width="1"/><path d="M7.6 4V11.2M4 7.6H11.2" stroke="#5f5f5f" stroke-width="1.1"/></svg>
<div class="r" style="left:358.2px;top:373.3px;width:1.6px;height:1.6px;background:#999;"></div>
<div class="r" style="left:358.2px;top:376.9px;width:1.6px;height:1.6px;background:#999;"></div>
<div class="r" style="left:358.2px;top:380.6px;width:1.6px;height:1.6px;background:#999;"></div>
<div class="r" style="left:370.8px;top:371.8px;width:12.5px;height:12.2px;background:#fff;border:1px solid #c3c3c3;box-sizing:border-box;"></div>
<div class="r" style="left:383.3px;top:371.8px;width:166.7px;height:12.2px;background:#fff;border:1px solid #b4b4b4;box-sizing:border-box;border-radius:1.5px;"></div>
<div class="r" style="left:550px;top:371.8px;width:19.6px;height:12.2px;background:#d2d2d2;"></div>
<div class="r" style="left:569.6px;top:371.8px;width:12.2px;height:12.2px;background:#fff;border:1px solid #c3c3c3;box-sizing:border-box;"></div>
<svg class="r" style="left:374.2px;top:374.6px" width="4.4" height="6.4" viewBox="0 0 4.4 6.4"><path d="M4.4 0L0 3.2L4.4 6.4Z" fill="#555"/></svg>
<svg class="r" style="left:573.8px;top:374.6px" width="4.4" height="6.4" viewBox="0 0 4.4 6.4"><path d="M0 0L4.4 3.2L0 6.4Z" fill="#555"/></svg>
<!-- status bar -->
<div class="r" style="left:1px;top:387px;width:598px;height:19px;background:#f1f1f1;"></div>
<div class="r" style="left:1px;top:387px;width:598px;height:1px;background:#e9e9e9;"></div>
<span class="t" style="left:6.00px;top:390px;font-size:9.2px;color:#4a4a4a;transform:scaleX(0.9027);">Ready</span>
<div class="r" style="left:361.2px;top:387px;width:27.6px;height:19px;background:#c9c9c9;"></div>
<svg class="r" style="left:369.4px;top:391.6px" width="10" height="9.4" viewBox="0 0 10 9.4"><rect x="0.5" y="0.5" width="8.8" height="8.2" rx="0.8" fill="none" stroke="#707070" stroke-width="0.9"/><path d="M3.4 0.5V8.7M6.4 0.5V8.7M0.5 3.2H9.3M0.5 6H9.3" stroke="#707070" stroke-width="0.8"/></svg>
<svg class="r" style="left:396.8px;top:391.6px" width="10.6" height="9.4" viewBox="0 0 10.6 9.4"><rect x="0.5" y="0.5" width="9.6" height="8.2" rx="0.8" fill="none" stroke="#777" stroke-width="0.9"/><rect x="3" y="2.2" width="4.6" height="4.8" fill="none" stroke="#777" stroke-width="0.8"/><path d="M4.4 2.2V3.4M6.2 2.2V3.4M4.4 7V5.8M6.2 7V5.8" stroke="#999" stroke-width="0.6"/></svg>
<svg class="r" style="left:424.8px;top:391.6px" width="10.4" height="9.4" viewBox="0 0 10.4 9.4"><rect x="0.5" y="0.5" width="9.4" height="8.2" rx="0.8" fill="none" stroke="#777" stroke-width="0.9"/><path d="M3.2 0.5V4.4H7.2V0.5M5.2 0.5V4.4" fill="none" stroke="#777" stroke-width="0.8"/></svg>
<div class="r" style="left:447.9px;top:395.6px;width:5.6px;height:1.7px;background:#444;"></div>
<div class="r" style="left:456.5px;top:395.9px;width:85px;height:1px;background:#ababab;"></div>
<div class="r" style="left:496.9px;top:391.6px;width:3.7px;height:9px;background:#5c5c5c;"></div>
<div class="r" style="left:544.7px;top:395.6px;width:7px;height:1.7px;background:#333;"></div>
<div class="r" style="left:547.35px;top:392.9px;width:1.7px;height:7.1px;background:#333;"></div>
<span class="t" style="left:563.20px;top:390px;font-size:9.2px;color:#4a4a4a;transform:scaleX(0.8747);">100%</span>
<div class="r" style="left:0px;top:0px;width:1.2px;height:406px;background:#217346;"></div>
<div class="r" style="left:598.9px;top:0px;width:1.1px;height:406px;background:#217346;"></div>
</body></html>
